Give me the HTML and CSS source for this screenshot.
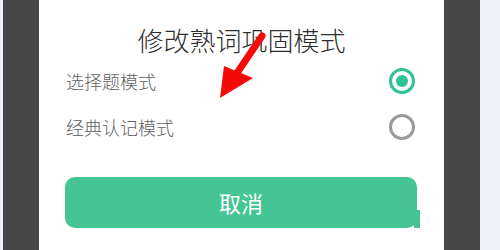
FILE: index.html
```html
<!DOCTYPE html>
<html lang="zh">
<head>
<meta charset="utf-8">
<link rel="stylesheet" href="styles.css">
</head>
<body>
<div class="screen">
  <div class="edge"></div>
  <div class="shade"></div>
  <div class="panel">
    <div class="title">修改熟词巩固模式</div>
    <div class="row">
      <span class="label">选择题模式</span>
      <span class="radio on"></span>
    </div>
    <div class="row">
      <span class="label">经典认记模式</span>
      <span class="radio"></span>
    </div>
    <div class="btn">取消</div>
    <svg class="arrow" width="80" height="80" viewBox="0 0 80 80">
      <line x1="62" y1="6" x2="35" y2="46" stroke="#f50a0a" stroke-width="7" stroke-linecap="round"/>
      <polygon points="24,36 53,48 20,68" fill="#f50a0a"/>
    </svg>
  </div>
  <div class="shade"></div>
  <div class="edge wide"></div>
</div>
</body>
</html>
```
FILE: styles.css
```css
html, body {
  margin: 0;
  padding: 0;
}
body {
  width: 500px;
  height: 250px;
  overflow: hidden;
  font-family: "Noto Sans CJK SC", "Noto Sans", sans-serif;
}
.screen {
  display: flex;
  height: 250px;
}
.edge {
  width: 3px;
  background: #edf1f9;
}
.edge.wide {
  width: 20px;
}
.shade {
  width: 36px;
  background: #474747;
}
.panel {
  position: relative;
  width: 405px;
  background: #ffffff;
  padding: 22px 30px 0 27px;
  box-sizing: border-box;
}
.title {
  text-align: center;
  font-size: 26px;
  font-weight: 300;
  line-height: 36px;
  color: #2e2e2e;
  padding-left: 3px;
}
.row {
  display: flex;
  align-items: center;
  justify-content: space-between;
  height: 46px;
}
.label {
  font-size: 18px;
  font-weight: 300;
  color: #5f5f5f;
}
.radio {
  width: 20px;
  height: 20px;
  border: 3px solid #9a9a9a;
  border-radius: 50%;
  box-sizing: content-box;
  position: relative;
  margin-right: -1px;
}
.radio.on {
  border-color: #2dc397;
}
.radio.on::after {
  content: "";
  position: absolute;
  left: 4px;
  top: 4px;
  width: 12px;
  height: 12px;
  border-radius: 50%;
  background: #2dc397;
}
.btn {
  position: relative;
  margin-top: 27px;
  margin-left: -1px;
  width: 352px;
  height: 51px;
  background: #45c594;
  border-radius: 10px;
  color: #ffffff;
  font-size: 22px;
  font-weight: 400;
  line-height: 51px;
  text-align: center;
}
.btn::after {
  content: "";
  position: absolute;
  right: -3px;
  top: 33px;
  width: 6px;
  height: 18px;
  background: #45c594;
}
.arrow {
  position: absolute;
  left: 161px;
  top: 30px;
}
```
